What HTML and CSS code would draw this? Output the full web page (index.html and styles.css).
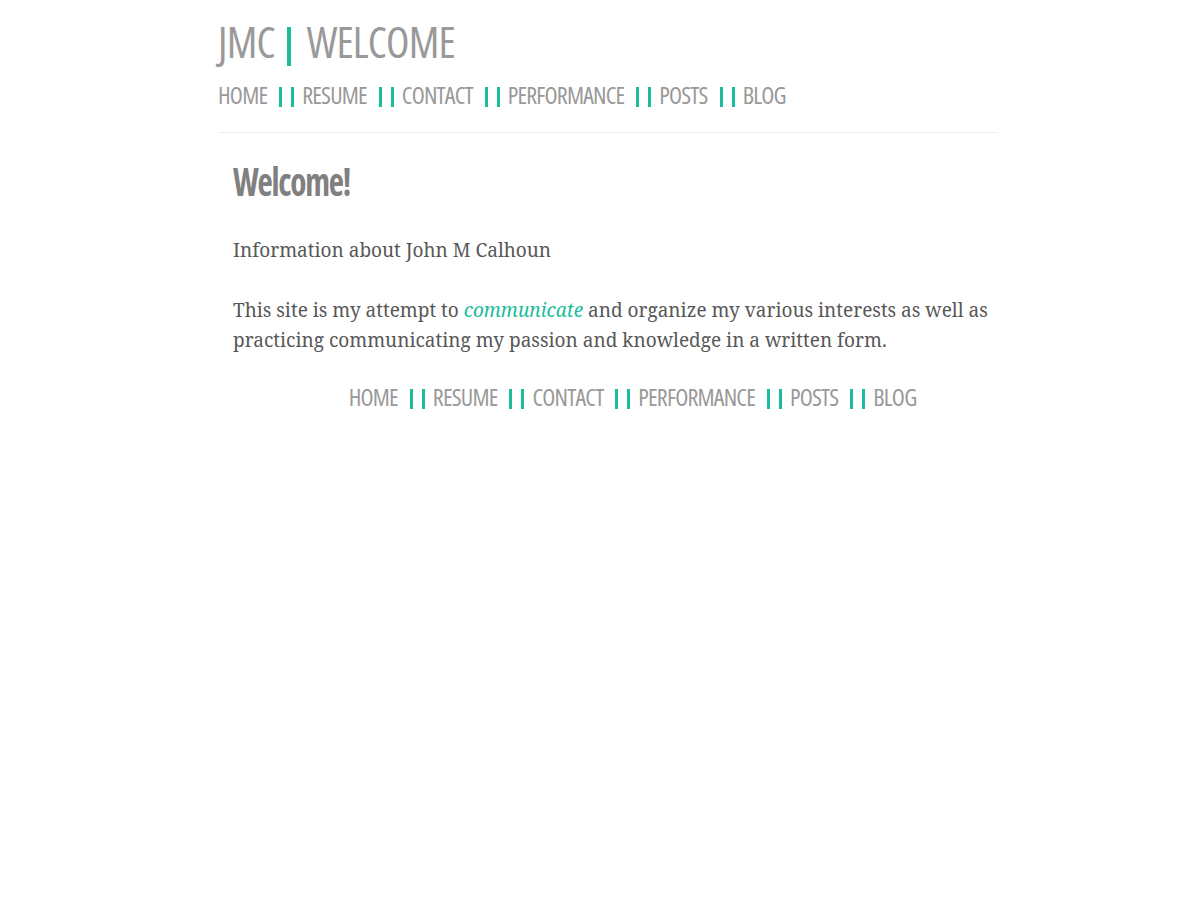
FILE: index.html
```html
<!DOCTYPE html>
<html lang="en">
<head>
<meta charset="utf-8">
<title>JMC | Welcome</title>
<link rel="stylesheet" href="styles.css">
</head>
<body>
<div class="wrap">
  <header class="site-header">
    <h1 class="site-title">JMC<span class="pipe pipe-lg"></span>WELCOME</h1>
    <nav class="nav">
      <a href="#">HOME</a><span class="sep"><span class="pipe"></span><span class="pipe"></span></span><a href="#">RESUME</a><span class="sep"><span class="pipe"></span><span class="pipe"></span></span><a href="#">CONTACT</a><span class="sep"><span class="pipe"></span><span class="pipe"></span></span><a href="#">PERFORMANCE</a><span class="sep"><span class="pipe"></span><span class="pipe"></span></span><a href="#">POSTS</a><span class="sep"><span class="pipe"></span><span class="pipe"></span></span><a href="#">BLOG</a>
    </nav>
  </header>
  <main class="content">
    <h2 class="page-title">Welcome!</h2>
    <p>Information about John M Calhoun</p>
    <p>This site is my attempt to <em class="accent">communicate</em> and organize my various interests as well as practicing communicating my passion and knowledge in a written form.</p>
    <nav class="nav nav-footer">
      <a href="#">HOME</a><span class="sep"><span class="pipe"></span><span class="pipe"></span></span><a href="#">RESUME</a><span class="sep"><span class="pipe"></span><span class="pipe"></span></span><a href="#">CONTACT</a><span class="sep"><span class="pipe"></span><span class="pipe"></span></span><a href="#">PERFORMANCE</a><span class="sep"><span class="pipe"></span><span class="pipe"></span></span><a href="#">POSTS</a><span class="sep"><span class="pipe"></span><span class="pipe"></span></span><a href="#">BLOG</a>
    </nav>
  </main>
</div>
</body>
</html>
```

FILE: styles.css
```css
html, body {
  margin: 0;
  padding: 0;
  background: #ffffff;
}

.wrap {
  width: 780px;
  margin: 0 auto;
  padding-left: 16px;
}

.site-header {
  padding-top: 17px;
  padding-bottom: 25px;
  border-bottom: 1px solid #eeeeee;
}

.site-title {
  margin: 0;
  display: flex;
  align-items: flex-start;
  font-family: "Open Sans", sans-serif;
  font-stretch: 75%;
  font-weight: 520;
  font-size: 43px;
  line-height: 50px;
  letter-spacing: -0.8px;
  color: #999999;
}

.pipe {
  display: block;
  width: 3px;
  height: 20px;
  background: #1abc9c;
}

.pipe-lg {
  width: 4px;
  height: 39px;
  margin: 10px 16px 0 12px;
}

.nav {
  display: flex;
  align-items: flex-start;
  margin-top: 16px;
  font-family: "Open Sans", sans-serif;
  font-stretch: 75%;
  font-weight: 520;
  font-size: 24px;
  line-height: 24px;
  letter-spacing: -0.8px;
}

.nav a {
  color: #999999;
  text-decoration: none;
}

.sep {
  display: flex;
  gap: 9px;
  margin: 4px 8px 0 12px;
}

.content {
  padding: 24px 10px 0 15px;
}

.page-title {
  margin: 0 0 30px;
  font-family: "Open Sans", sans-serif;
  font-stretch: 75%;
  font-weight: 700;
  font-size: 40px;
  line-height: 48px;
  letter-spacing: -1.5px;
  color: #808080;
  transform: scaleX(0.83);
  transform-origin: left center;
}

.content p {
  margin: 0 0 30px;
  font-family: "Noto Serif", "DejaVu Serif", serif;
  font-size: 19px;
  line-height: 30px;
  color: #585858;
}

.accent {
  color: #1abc9c;
}

.content .nav-footer {
  justify-content: center;
  margin-top: 7px;
  padding-left: 44px;
}
```
